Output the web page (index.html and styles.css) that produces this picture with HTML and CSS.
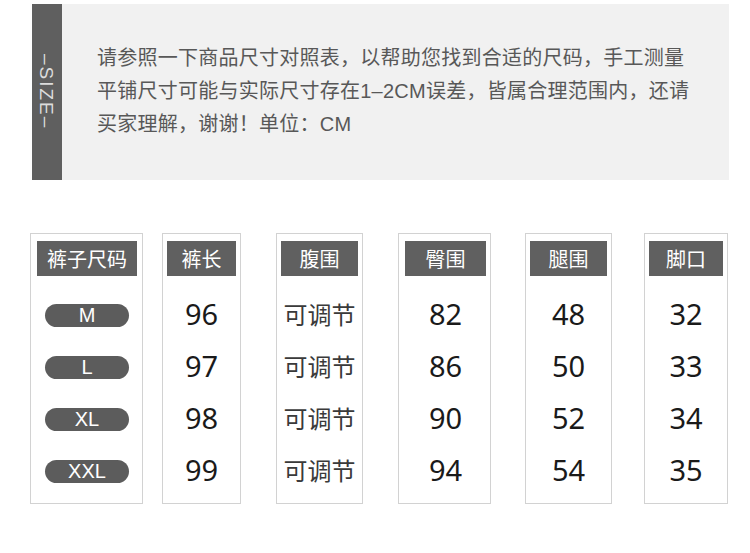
FILE: index.html
```html
<!DOCTYPE html>
<html lang="zh-CN">
<head>
<meta charset="utf-8">
<title>尺码表</title>
<link rel="stylesheet" href="styles.css">
</head>
<body>
<section class="intro">
  <div class="side"><span class="side-text">–SIZE–</span></div>
  <div class="note">
    <p>请参照一下商品尺寸对照表，以帮助您找到合适的尺码，手工测量<br>平铺尺寸可能与实际尺寸存在1–2CM误差，皆属合理范围内，还请<br>买家理解，谢谢！单位：CM</p>
  </div>
</section>

<section class="table">
  <div class="col c1">
    <div class="head">裤子尺码</div>
    <div class="cell"><span class="pill">M</span></div>
    <div class="cell"><span class="pill">L</span></div>
    <div class="cell"><span class="pill">XL</span></div>
    <div class="cell"><span class="pill">XXL</span></div>
  </div>
  <div class="col c2">
    <div class="head">裤长</div>
    <div class="cell num">96</div>
    <div class="cell num">97</div>
    <div class="cell num">98</div>
    <div class="cell num">99</div>
  </div>
  <div class="col c3">
    <div class="head">腹围</div>
    <div class="cell cn">可调节</div>
    <div class="cell cn">可调节</div>
    <div class="cell cn">可调节</div>
    <div class="cell cn">可调节</div>
  </div>
  <div class="col c4">
    <div class="head">臀围</div>
    <div class="cell num">82</div>
    <div class="cell num">86</div>
    <div class="cell num">90</div>
    <div class="cell num">94</div>
  </div>
  <div class="col c5">
    <div class="head">腿围</div>
    <div class="cell num">48</div>
    <div class="cell num">50</div>
    <div class="cell num">52</div>
    <div class="cell num">54</div>
  </div>
  <div class="col c6">
    <div class="head">脚口</div>
    <div class="cell num">32</div>
    <div class="cell num">33</div>
    <div class="cell num">34</div>
    <div class="cell num">35</div>
  </div>
</section>
</body>
</html>
```

FILE: styles.css
```css
* { box-sizing: border-box; }
html, body { margin: 0; padding: 0; background: #ffffff; }
body {
  width: 750px;
  height: 553px;
  overflow: hidden;
  font-family: "Liberation Sans", "Noto Sans CJK SC", sans-serif;
}

.intro {
  display: flex;
  margin: 4px 0 0 32px;
  width: 697px;
  height: 176px;
}
.side {
  width: 30px;
  background: #5f5f5f;
  display: flex;
  align-items: center;
  justify-content: center;
}
.side-text {
  writing-mode: vertical-rl;
  color: #dcdcdc;
  font-family: "Liberation Sans", sans-serif;
  font-size: 19px;
  letter-spacing: 2px;
  line-height: 1;
  margin-right: 1px;
}
.note {
  flex: 1;
  background: #f1f1f1;
  padding: 38px 0 0 35px;
}
.note p {
  margin: 0;
  font-size: 20px;
  line-height: 33px;
  letter-spacing: 0.25px;
  color: #585858;
  white-space: nowrap;
}

.table {
  display: flex;
  margin-top: 53px;
  padding-left: 30px;
}
.col {
  height: 271px;
  border: 1px solid #d2d2d2;
  padding: 7px 4px 8px;
  display: flex;
  flex-direction: column;
}
.c1 { width: 113px; padding-left: 6px; padding-right: 5px; }
.c2 { width: 79px; margin-left: 19px; }
.c3 { width: 87px; margin-left: 35px; }
.c4 { width: 93px; margin-left: 35px; padding-left: 6px; }
.c5 { width: 87px; margin-left: 34px; }
.c6 { width: 84px; margin-left: 32px; }

.head {
  height: 35px;
  background: #606060;
  color: #ffffff;
  font-family: "Noto Sans CJK SC", sans-serif;
  font-size: 20px;
  line-height: 35px;
  text-align: center;
  margin-bottom: 11px;
}
.cell {
  height: 52px;
  display: flex;
  align-items: center;
  justify-content: center;
}
.pill {
  width: 84px;
  height: 23px;
  border-radius: 12px;
  background: #5c5c5c;
  color: #ffffff;
  font-family: "Liberation Sans", sans-serif;
  font-size: 20px;
  line-height: 23px;
  text-align: center;
  margin-top: 4px;
}
.num {
  font-family: "Noto Sans", "Open Sans", sans-serif;
  font-size: 29px;
  color: #1a1a1a;
}
.cn {
  font-family: "Noto Sans CJK SC", sans-serif;
  font-size: 24px;
  color: #3a3a3a;
}
```
